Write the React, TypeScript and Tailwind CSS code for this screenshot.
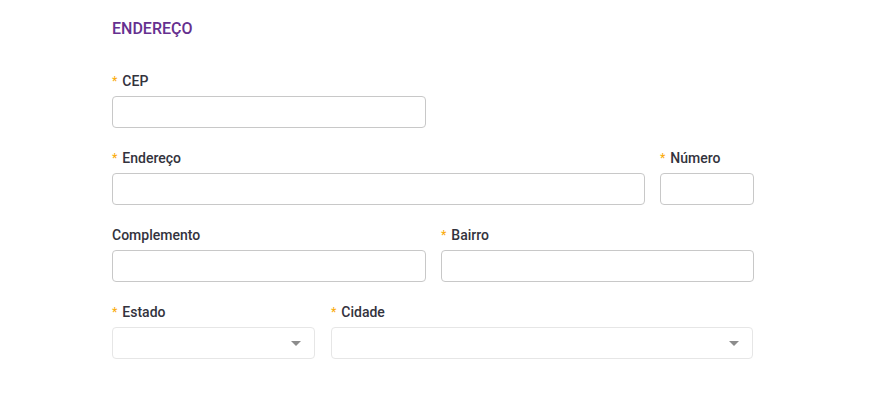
import React from 'react';

function Label({ text, required }: { text: string; required?: boolean }) {
  return (
    <label className="flex h-5 items-center text-sm font-medium leading-5 text-[#33333d]">
      {required && <span className="mr-[5px] text-xs text-[#faad14]">*</span>}
      {text}
    </label>
  );
}

function TextField({ label, required }: { label: string; required?: boolean }) {
  return (
    <div className="flex flex-col gap-[5px]">
      <Label text={label} required={required} />
      <input className="h-8 w-full rounded-[4px] border border-[#c8c8c8] bg-white px-2 text-sm outline-none" />
    </div>
  );
}

function SelectField({ label, required }: { label: string; required?: boolean }) {
  return (
    <div className="flex flex-col gap-[5px]">
      <Label text={label} required={required} />
      <div className="flex h-8 w-full items-center justify-end rounded-[4px] border border-[#e6e6e6] bg-white pr-[13px]">
        <svg width="10" height="5" viewBox="0 0 10 5">
          <path d="M0 0 L10 0 L5 5 Z" fill="#8c8c8c" />
        </svg>
      </div>
    </div>
  );
}

export default function App() {
  return (
    <div className="min-h-screen bg-white font-['Roboto',sans-serif]">
      <div className="ml-[112px] w-[642px] pt-[17px]">
        <h2 className="text-base font-medium leading-6 text-[#66308f]">ENDEREÇO</h2>

        <div className="mt-[30px] flex flex-col gap-5">
          <div className="grid grid-cols-[314px_1fr] gap-[15px]">
            <TextField label="CEP" required />
          </div>
          <div className="grid grid-cols-[533px_1fr] gap-[15px]">
            <TextField label="Endereço" required />
            <TextField label="Número" required />
          </div>
          <div className="grid grid-cols-[314px_1fr] gap-[15px]">
            <TextField label="Complemento" />
            <TextField label="Bairro" required />
          </div>
          <div className="grid grid-cols-[203px_422px] gap-4">
            <SelectField label="Estado" required />
            <SelectField label="Cidade" required />
          </div>
        </div>
      </div>
    </div>
  );
}
